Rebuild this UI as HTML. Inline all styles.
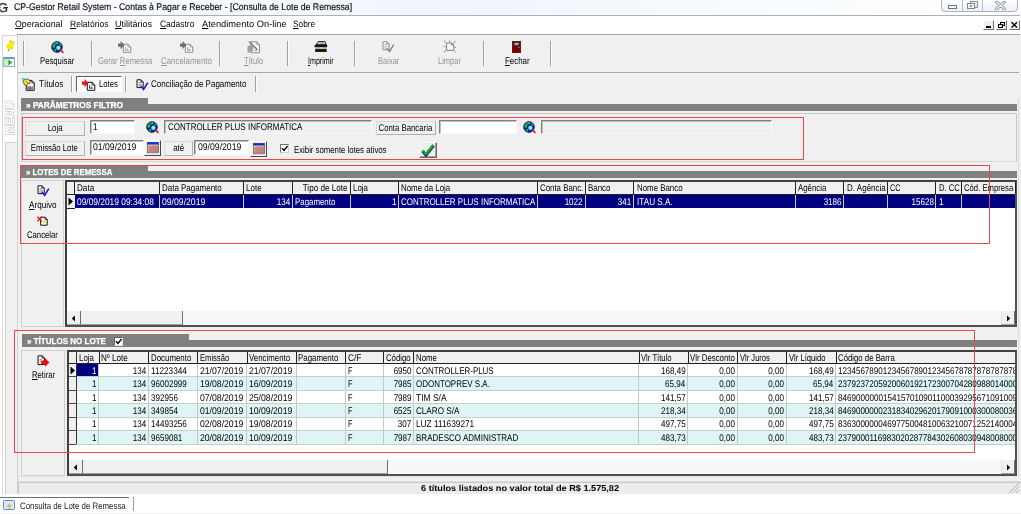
<!DOCTYPE html>
<html><head><meta charset="utf-8"><title>Consulta de Lote de Remessa</title>
<style>
html,body{margin:0;padding:0;background:#fff;}
body{width:1021px;height:514px;position:relative;overflow:hidden;font-family:"Liberation Sans",sans-serif;}
#r div,#r span,#r svg{position:absolute;}
#r{position:absolute;left:0;top:0;width:1021px;height:514px;overflow:hidden;will-change:transform;}
.t{white-space:nowrap;display:block;line-height:12px;text-rendering:geometricPrecision;}
.t u{text-decoration:underline;text-underline-offset:1px;text-decoration-thickness:0.8px;}
</style></head><body><div id="r">
<div style="left:0px;top:0px;width:1021px;height:514px;background:#fff;"></div>
<div style="left:0px;top:0px;width:1021px;height:15px;background:linear-gradient(90deg,#fff 0,#f6fafd 20%,#eef5fb 45%,#f7fbfe 70%,#fff 100%);"></div>
<div style="left:0px;top:14.6px;width:1020px;height:1.3px;background:#b0b0b0;"></div>
<div style="left:0px;top:1.5px;width:9.7px;height:11px;background:#fdfdfd;"></div>
<span class="t " style="left:-1.60px;transform-origin:0 0;top:2px;font-size:12.8px;color:#2a2a2a;transform:scaleX(1.0044);-webkit-text-stroke:0.25px #2a2a2a;">G</span>
<div style="left:3.6px;top:7px;width:4.6px;height:1.2px;background:#2a2a2a;"></div>
<div style="left:0px;top:6.6px;width:1.2px;height:1.4px;background:#f06020;"></div>
<span class="t " style="left:13.80px;transform-origin:0 0;top:2px;font-size:9.7px;color:#0c0c18;transform:scaleX(0.8995);-webkit-text-stroke:0.15px #0c0c18;">CP-Gestor Retail System - Contas à Pagar e Receber - [Consulta de Lote de Remessa]</span>
<div style="left:941px;top:-1px;width:77px;height:13px;border:1px solid #aab2c0;border-radius:0 0 4px 4px;background:linear-gradient(#fdfeff,#edf2f8);box-sizing:border-box"></div>
<div style="left:962px;top:0px;width:1px;height:11px;background:#b4bcc8;"></div>
<div style="left:982px;top:0px;width:1px;height:11px;background:#b4bcc8;"></div>
<div style="left:948px;top:5px;width:9px;height:4px;border:1px solid #6a7284;box-sizing:border-box;background:#fff"></div>
<div style="left:970px;top:1px;width:7.5px;height:6.5px;border:1px solid #8890a4;box-sizing:border-box;background:#e8ecf2"></div>
<div style="left:967px;top:2.8px;width:7.5px;height:6.7px;border:1px solid #7a8296;box-sizing:border-box;background:#f4f6fa"></div>
<div style="left:969.6px;top:5px;width:2.4px;height:2.4px;border:0.6px solid #8890a4;box-sizing:border-box"></div>
<svg style="left:995px;top:1px" width="11" height="9" viewBox="0 0 11 9"><path d="M1.5 1 L9.5 8 M9.5 1 L1.5 8" stroke="#7c849a" stroke-width="2.8" stroke-linecap="round" fill="none"/><path d="M1.5 1 L9.5 8 M9.5 1 L1.5 8" stroke="#fff" stroke-width="1.1" stroke-linecap="round" fill="none"/></svg>
<span class="t " style="left:14.70px;transform-origin:0 0;top:18px;font-size:9.2px;color:#000;transform:scaleX(0.9575);"><u>O</u>peracional</span>
<span class="t " style="left:69.60px;transform-origin:0 0;top:18px;font-size:9.2px;color:#000;transform:scaleX(0.9295);"><u>R</u>elatórios</span>
<span class="t " style="left:115.00px;transform-origin:0 0;top:18px;font-size:9.2px;color:#000;transform:scaleX(0.9781);"><u>U</u>tilitários</span>
<span class="t " style="left:160.30px;transform-origin:0 0;top:18px;font-size:9.2px;color:#000;transform:scaleX(0.9215);"><u>C</u>adastro</span>
<span class="t " style="left:202.00px;transform-origin:0 0;top:18px;font-size:9.2px;color:#000;transform:scaleX(1.0111);"><u>A</u>tendimento On-line</span>
<span class="t " style="left:292.60px;transform-origin:0 0;top:18px;font-size:9.2px;color:#000;transform:scaleX(0.9042);"><u>S</u>obre</span>
<div style="left:17px;top:34px;width:1003px;height:1px;background:#a6a6a6;"></div>
<div style="left:983px;top:19.5px;width:11px;height:10px;background:#f0f0f0;border-right:1px solid #707070;border-bottom:1px solid #707070;border-top:1px solid #fff;border-left:1px solid #fff;box-sizing:border-box"></div>
<div style="left:996px;top:19.5px;width:11px;height:10px;background:#f0f0f0;border-right:1px solid #707070;border-bottom:1px solid #707070;border-top:1px solid #fff;border-left:1px solid #fff;box-sizing:border-box"></div>
<div style="left:1009px;top:19.5px;width:11px;height:10px;background:#f0f0f0;border-right:1px solid #707070;border-bottom:1px solid #707070;border-top:1px solid #fff;border-left:1px solid #fff;box-sizing:border-box"></div>
<div style="left:986px;top:25.5px;width:5px;height:2px;background:#000;"></div>
<div style="left:1000px;top:21.5px;width:5px;height:4px;border:1px solid #000;border-top-width:1.5px;box-sizing:border-box"></div>
<div style="left:998px;top:23.5px;width:5px;height:4px;border:1px solid #000;border-top-width:1.5px;box-sizing:border-box;background:#f0f0f0"></div>
<svg style="left:1010px;top:20.5px" width="9" height="8" viewBox="0 0 9 8"><path d="M1.5 1.2 L7 6.5 M7 1.2 L1.5 6.5" stroke="#000" stroke-width="1.3" fill="none"/></svg>
<div style="left:0px;top:35px;width:1021px;height:459px;background:#f0f0f0;"></div>
<div style="left:0px;top:35px;width:18px;height:459px;background:#fff;"></div>
<div style="left:2px;top:36px;width:1px;height:458px;background:#d4d4d4;"></div>
<div style="left:17px;top:36px;width:1px;height:458px;background:#d0d0d0;"></div>
<div style="left:2px;top:35px;width:16px;height:1px;background:#d4d4d4;"></div>
<div style="left:6px;top:142px;width:11px;height:352px;background:#f0f0f0;"></div>
<div style="left:5px;top:142px;width:1px;height:352px;background:#d0d0d0;"></div>
<div style="left:5px;top:142px;width:13px;height:1px;background:#d0d0d0;"></div>
<div style="left:7px;top:143px;width:10px;height:351px;background:#f0f0f0;"></div>
<span class="t" style="left:3.5px;top:134.8px;font-size:12.6px;line-height:13px;font-weight:bold;color:#fff;-webkit-text-stroke:0.9px #b4b4b4;paint-order:stroke fill;transform:rotate(-90deg) scaleX(0.93);transform-origin:0 0;">MENU</span>
<svg style="left:5px;top:39px" width="11" height="14" viewBox="0 0 11 14"><path d="M4.6 1.3 L9.6 3.2 L8.6 4.6 L7.9 6.5 L8.3 9 Q6.5 11 3.6 10 Q1.2 8.8 1.4 6.6 L3.6 5.4 L4.6 3.6 Z" fill="#f4ec10" stroke="#d8cc20" stroke-width="0.5"/><path d="M4.6 1.3 L9.6 3.2 L9.2 4 L4.4 2.2 Z" fill="#e0d400"/><path d="M4 10.2 L3 12.6" stroke="#808080" stroke-width="0.9"/></svg>
<div style="left:3px;top:56.5px;width:12px;height:10px;border:1px solid #8ab0e4;border-top:2px solid #6a98dc;border-radius:1px;box-sizing:border-box;background:#fff"></div>
<div style="left:4px;top:58.5px;width:4.5px;height:7px;background:#c8f0c0;"></div>
<svg style="left:7.5px;top:58.5px" width="5" height="7" viewBox="0 0 5 7"><path d="M0.3 0.5 L4.6 3.5 L0.3 6.5 Z" fill="#38a838"/></svg>
<div style="left:18px;top:72px;width:1001px;height:1px;background:#a8a8a8;"></div>
<div style="left:23px;top:41px;width:1px;height:25px;background:#a0a0a0;"></div>
<div style="left:24px;top:41px;width:1px;height:25px;background:#fdfdfd;"></div>
<div style="left:91px;top:41px;width:1px;height:25px;background:#a0a0a0;"></div>
<div style="left:92px;top:41px;width:1px;height:25px;background:#fdfdfd;"></div>
<div style="left:219px;top:41px;width:1px;height:25px;background:#a0a0a0;"></div>
<div style="left:220px;top:41px;width:1px;height:25px;background:#fdfdfd;"></div>
<div style="left:287px;top:41px;width:1px;height:25px;background:#a0a0a0;"></div>
<div style="left:288px;top:41px;width:1px;height:25px;background:#fdfdfd;"></div>
<div style="left:354px;top:41px;width:1px;height:25px;background:#a0a0a0;"></div>
<div style="left:355px;top:41px;width:1px;height:25px;background:#fdfdfd;"></div>
<div style="left:483px;top:41px;width:1px;height:25px;background:#a0a0a0;"></div>
<div style="left:484px;top:41px;width:1px;height:25px;background:#fdfdfd;"></div>
<div style="left:550px;top:41px;width:1px;height:25px;background:#a0a0a0;"></div>
<div style="left:551px;top:41px;width:1px;height:25px;background:#fdfdfd;"></div>
<svg style="left:50.5px;top:40.5px" width="14" height="13" viewBox="0 0 14 13"><circle cx="6" cy="6" r="5.4" fill="#0a18b8" stroke="#101830" stroke-width="0.7"/><path d="M2 3.2 Q3.8 0.9 6.6 1 L7.4 2.2 L5.8 3.4 L4.6 3.2 L3.8 4.8 L4.4 6 L3 6.8 L1.2 6.2 Z" fill="#18b030"/><path d="M2.6 8.2 L4.8 7.6 L5.6 9.6 L4.4 11 Z" fill="#18b030"/><path d="M8.2 1.6 L10.4 3.2 L10.8 5 L9.4 4.6 L8.4 3.4Z" fill="#18b030"/><path d="M2.4 5.4 L3.4 5.2 M6.2 2 L7 2.2" stroke="#e8ffe8" stroke-width="0.8"/><circle cx="7.4" cy="6.8" r="2.5" fill="#78f4fc" stroke="#082060" stroke-width="0.7"/><path d="M9.4 8.8 L12.4 11.8" stroke="#e8104a" stroke-width="1.7"/></svg>
<span class="t " style="left:40.00px;transform-origin:0 0;top:56px;font-size:9.7px;color:#000;transform:scaleX(0.7970);">Pesquisar</span>
<svg style="left:118px;top:40.8px" width="14" height="12" viewBox="0 0 14 12"><path d="M5.3 3.3 H10 L12.8 6 V11.3 H5.3 Z" fill="#fafafa" stroke="#8a8a8a" stroke-width="1"/><path d="M10 3.3 V6 H12.8" fill="none" stroke="#8a8a8a" stroke-width="0.8"/><path d="M7.5 6 V9.2 M7.2 9.2 H11 M9.3 7.5 V9.2" stroke="#9a9a9a" stroke-width="0.9" fill="none"/><path d="M0 2.4 H2.6 V0 L6.6 4.1 L2.6 8.2 V5.8 H0 Z" fill="#707070"/></svg>
<svg style="left:179.5px;top:40.8px" width="14" height="12" viewBox="0 0 14 12"><path d="M5.3 3.3 H10 L12.8 6 V11.3 H5.3 Z" fill="#fafafa" stroke="#8a8a8a" stroke-width="1"/><path d="M10 3.3 V6 H12.8" fill="none" stroke="#8a8a8a" stroke-width="0.8"/><path d="M7.5 6 V9.2 M7.2 9.2 H11 M9.3 7.5 V9.2" stroke="#9a9a9a" stroke-width="0.9" fill="none"/><path d="M0 2.4 H2.6 V0 L6.6 4.1 L2.6 8.2 V5.8 H0 Z" fill="#707070"/></svg>
<span class="t " style="left:98.00px;transform-origin:0 0;top:56px;font-size:9.7px;color:#949494;transform:scaleX(0.7946);">Gerar <u>R</u>emessa</span>
<span class="t " style="left:160.50px;transform-origin:0 0;top:56px;font-size:9.7px;color:#949494;transform:scaleX(0.8153);"><u>C</u>ancelamento</span>
<svg style="left:246.6px;top:40.6px" width="14" height="13" viewBox="0 0 14 13"><path d="M4 0.8 H9.8 L12.6 3.6 V11.8 H4 Z" fill="#f6f6f6" stroke="#8c8c8c" stroke-width="1"/><path d="M9.8 0.8 V3.6 H12.6" fill="none" stroke="#8c8c8c" stroke-width="0.8"/><path d="M0.5 5.2 L3.6 4 L5.8 5 L6.4 8 L4.6 11.4 H0.5 Z" fill="#a0a0a0"/><path d="M2 0.6 L10.4 8.8" stroke="#787878" stroke-width="1.4"/><path d="M6.6 9.6 H10.6" stroke="#a0a0a0" stroke-width="0.9"/></svg>
<span class="t " style="left:243.50px;transform-origin:0 0;top:56px;font-size:9.7px;color:#949494;transform:scaleX(0.7914);"><u>T</u>ítulo</span>
<svg style="left:314px;top:41px" width="14" height="12" viewBox="0 0 14 12"><path d="M4.2 0.6 H10.8 L12.2 3.8 H2.4 Z" fill="#f0f0f0" stroke="#000" stroke-width="0.9"/><path d="M5.4 1.9 H10 M4.8 2.9 H10.6" stroke="#606060" stroke-width="0.5"/><rect x="0.6" y="3.6" width="12.6" height="3" rx="1.2" fill="#141414"/><rect x="0.9" y="6.2" width="12" height="2" fill="#b4b4b4"/><rect x="6" y="6.4" width="2.8" height="1.4" fill="#f0e000"/><rect x="1" y="7.9" width="11.8" height="3.2" rx="1.2" fill="#1c1c1c"/></svg>
<span class="t " style="left:308.30px;transform-origin:0 0;top:56px;font-size:9.7px;color:#000;transform:scaleX(0.7338);"><u>I</u>mprimir</span>
<svg style="left:382.3px;top:41px" width="13" height="12" viewBox="0 0 13 12"><path d="M1 0.8 H5 L7.2 3 V8.8 H1 Z" fill="#f8f8f8" stroke="#8c8c8c" stroke-width="1"/><path d="M5 0.8 V3 H7.2" fill="none" stroke="#8c8c8c" stroke-width="0.8"/><path d="M2.4 3.6 H5.6 M2.4 5.4 H5.6 M2.4 7 H4.4" stroke="#a8a8a8" stroke-width="0.8"/><path d="M4.8 6.8 L7.6 10.6 L11.8 3.4" fill="none" stroke="#808080" stroke-width="1.3"/></svg>
<span class="t " style="left:377.80px;transform-origin:0 0;top:56px;font-size:9.7px;color:#949494;transform:scaleX(0.7783);">Baixar</span>
<svg style="left:442.6px;top:40.4px" width="14" height="13" viewBox="0 0 14 13"><path d="M3.6 3 H8.4 L10.8 5.2 V10.4 H3.6 Z" fill="#f8f8f8" stroke="#808080" stroke-width="1"/><path d="M8.4 3 V5.2 H10.8" fill="none" stroke="#808080" stroke-width="0.8"/><path d="M0.8 0.6 L3.2 2.8 M12.8 0.8 L9.6 4 M0.6 6.6 H2.6 M0.8 12 L3.2 10.4 M12.8 12.2 L11.2 10.8 M6.8 0.4 V2.4 M11.4 7.4 H13" stroke="#808080" stroke-width="0.9"/></svg>
<span class="t " style="left:438.40px;transform-origin:0 0;top:56px;font-size:9.7px;color:#949494;transform:scaleX(0.7757);">Limpar</span>
<svg style="left:512px;top:41px" width="9" height="12" viewBox="0 0 9 12"><rect x="0.3" y="0.3" width="8.4" height="11.4" fill="#800000" stroke="#400000" stroke-width="0.6"/><rect x="2.3" y="1.8" width="4.4" height="2.4" fill="#30d8f0"/><rect x="6.4" y="6" width="1" height="1" fill="#f0c020"/></svg>
<span class="t " style="left:505.00px;transform-origin:0 0;top:56px;font-size:9.7px;color:#000;transform:scaleX(0.8148);"><u>F</u>echar</span>
<svg style="left:21.6px;top:77.6px" width="13" height="13" viewBox="0 0 13 13"><path d="M4.2 2.4 H9.8 L12.2 4.8 V12.3 H4.2 Z" fill="#fff" stroke="#101010" stroke-width="1"/><path d="M9.8 2.4 V4.8 H12.2" fill="none" stroke="#101010" stroke-width="0.8"/><path d="M5.8 11 V8.2 M7.2 11 V8.2 M8.6 11 V8.2 M10.2 11 V8.2" stroke="#202020" stroke-width="0.8"/><path d="M5.6 11.2 H10.6" stroke="#202020" stroke-width="0.6"/><path d="M0 0 H3 L0 3 Z" fill="#20d8f0"/><path d="M1 3.6 Q1.4 1.2 4.4 0.9 Q7.4 1.1 8.2 3.2 L7.6 6 L5.8 5 L4.8 7.6 L2.6 7 Z" fill="#f0e050" stroke="#403800" stroke-width="0.7"/><path d="M3 3 L5.4 4.6" stroke="#807000" stroke-width="0.6"/></svg>
<span class="t " style="left:39.20px;transform-origin:0 0;top:79px;font-size:9.7px;color:#000;transform:scaleX(0.8313);">Títulos</span>
<div style="left:71px;top:76px;width:1px;height:16px;background:#a0a0a0;"></div>
<div style="left:72px;top:76px;width:1px;height:16px;background:#fdfdfd;"></div>
<div style="left:76px;top:76px;width:46px;height:16px;background:#fafafa;border-top:1px solid #606060;border-left:1px solid #606060;border-right:1px solid #fff;border-bottom:1px solid #fff;box-sizing:border-box"></div>
<svg style="left:82px;top:78.7px" width="14" height="12" viewBox="0 0 14 12"><path d="M5.3 3.3 H10 L12.8 6 V11.3 H5.3 Z" fill="#fff" stroke="#101010" stroke-width="1"/><path d="M10 3.3 V6 H12.8" fill="none" stroke="#101010" stroke-width="0.8"/><path d="M7.5 6 V9.2 M7.2 9.2 H11 M9.3 7.5 V9.2" stroke="#404040" stroke-width="0.9" fill="none"/><path d="M0 2.4 H2.6 V0 L6.6 4.1 L2.6 8.2 V5.8 H0 Z" fill="#f01010"/></svg>
<span class="t " style="left:99.00px;transform-origin:0 0;top:79px;font-size:9.7px;color:#000;transform:scaleX(0.7923);">Lotes</span>
<div style="left:125px;top:76px;width:1px;height:16px;background:#a0a0a0;"></div>
<div style="left:126px;top:76px;width:1px;height:16px;background:#fdfdfd;"></div>
<svg style="left:135.7px;top:78.8px" width="13" height="12" viewBox="0 0 13 12"><path d="M1 0.8 H5 L7.2 3 V8.6 H1 Z" fill="#fff" stroke="#101010" stroke-width="1"/><path d="M5 0.8 V3 H7.2" fill="none" stroke="#101010" stroke-width="0.8"/><path d="M2.4 3.6 H5.6 M2.4 5.4 H5.6 M2.4 7 H4.4" stroke="#707070" stroke-width="0.8"/><path d="M4.8 6.6 L7.6 10.4 L11.8 3.6" fill="none" stroke="#1018e0" stroke-width="1.6"/></svg>
<span class="t " style="left:151.40px;transform-origin:0 0;top:79px;font-size:9.7px;color:#000;transform:scaleX(0.8246);">Conciliação de Pagamento</span>
<div style="left:255px;top:76px;width:1px;height:16px;background:#a0a0a0;"></div>
<div style="left:256px;top:76px;width:1px;height:16px;background:#fdfdfd;"></div>
<div style="left:21px;top:98px;width:127px;height:12.7px;background:#808080;"></div>
<div style="left:21px;top:103.9px;width:996px;height:6.8px;background:#808080;"></div>
<span class="t " style="left:26.20px;transform-origin:0 0;top:99px;font-size:8.6px;color:#fff;font-weight:bold;transform:scaleX(0.9652);-webkit-text-stroke:0.25px #fff;">» PARÂMETROS FILTRO</span>
<div style="left:21px;top:113px;width:996px;height:49px;border:1px solid #c8c8c8;border-bottom-color:#d8d8d8;box-sizing:border-box;background:#f0f0f0"></div>
<div style="left:25px;top:121px;width:59.5px;height:14.5px;background:#f0f0f0;border:1px solid #b0b0b0;border-top-color:#d8d8d8;border-left-color:#d8d8d8;box-sizing:border-box"></div>
<span class="t " style="left:45.58px;transform-origin:50% 0;top:123px;font-size:9.7px;color:#000;transform:scaleX(0.8151);">Loja</span>
<div style="left:90px;top:120px;width:45px;height:14px;background:#fff;border-top:1px solid #808080;border-left:1px solid #808080;border-right:1px solid #f8f8f8;border-bottom:1px solid #f8f8f8;box-sizing:border-box;box-shadow:inset 1px 1px 0 #c0c0c0"></div>
<span class="t " style="left:93.00px;transform-origin:0 0;top:122px;font-size:9.7px;color:#000;transform:scaleX(0.8312);">1</span>
<svg style="left:145.5px;top:120.5px" width="14" height="13" viewBox="0 0 14 13"><circle cx="6" cy="6" r="5.4" fill="#0a18b8" stroke="#101830" stroke-width="0.7"/><path d="M2 3.2 Q3.8 0.9 6.6 1 L7.4 2.2 L5.8 3.4 L4.6 3.2 L3.8 4.8 L4.4 6 L3 6.8 L1.2 6.2 Z" fill="#18b030"/><path d="M2.6 8.2 L4.8 7.6 L5.6 9.6 L4.4 11 Z" fill="#18b030"/><path d="M8.2 1.6 L10.4 3.2 L10.8 5 L9.4 4.6 L8.4 3.4Z" fill="#18b030"/><path d="M2.4 5.4 L3.4 5.2 M6.2 2 L7 2.2" stroke="#e8ffe8" stroke-width="0.8"/><circle cx="7.4" cy="6.8" r="2.5" fill="#78f4fc" stroke="#082060" stroke-width="0.7"/><path d="M9.4 8.8 L12.4 11.8" stroke="#e8104a" stroke-width="1.7"/></svg>
<div style="left:164px;top:120px;width:208px;height:14px;background:#f0f0f0;border-top:1px solid #808080;border-left:1px solid #808080;border-right:1px solid #f8f8f8;border-bottom:1px solid #f8f8f8;box-sizing:border-box;box-shadow:inset 1px 1px 0 #c0c0c0"></div>
<span class="t " style="left:167.50px;transform-origin:0 0;top:122px;font-size:9.7px;color:#000;transform:scaleX(0.8247);">CONTROLLER PLUS INFORMATICA</span>
<div style="left:376px;top:121px;width:59.6px;height:14px;background:#f0f0f0;border:1px solid #b0b0b0;border-top-color:#d8d8d8;border-left-color:#d8d8d8;box-sizing:border-box"></div>
<span class="t " style="left:372.37px;transform-origin:50% 0;top:123px;font-size:9.7px;color:#000;transform:scaleX(0.8048);">Conta Bancaria</span>
<div style="left:439px;top:120px;width:78px;height:14px;background:#fff;border-top:1px solid #808080;border-left:1px solid #808080;border-right:1px solid #f8f8f8;border-bottom:1px solid #f8f8f8;box-sizing:border-box;box-shadow:inset 1px 1px 0 #c0c0c0"></div>
<svg style="left:523px;top:121px" width="14" height="13" viewBox="0 0 14 13"><circle cx="6" cy="6" r="5.4" fill="#0a18b8" stroke="#101830" stroke-width="0.7"/><path d="M2 3.2 Q3.8 0.9 6.6 1 L7.4 2.2 L5.8 3.4 L4.6 3.2 L3.8 4.8 L4.4 6 L3 6.8 L1.2 6.2 Z" fill="#18b030"/><path d="M2.6 8.2 L4.8 7.6 L5.6 9.6 L4.4 11 Z" fill="#18b030"/><path d="M8.2 1.6 L10.4 3.2 L10.8 5 L9.4 4.6 L8.4 3.4Z" fill="#18b030"/><path d="M2.4 5.4 L3.4 5.2 M6.2 2 L7 2.2" stroke="#e8ffe8" stroke-width="0.8"/><circle cx="7.4" cy="6.8" r="2.5" fill="#78f4fc" stroke="#082060" stroke-width="0.7"/><path d="M9.4 8.8 L12.4 11.8" stroke="#e8104a" stroke-width="1.7"/></svg>
<div style="left:541px;top:120px;width:231px;height:14px;background:#f0f0f0;border-top:1px solid #808080;border-left:1px solid #808080;border-right:1px solid #f8f8f8;border-bottom:1px solid #f8f8f8;box-sizing:border-box;box-shadow:inset 1px 1px 0 #c0c0c0"></div>
<div style="left:25px;top:141px;width:59.5px;height:14.7px;background:#f0f0f0;border:1px solid #b0b0b0;border-top-color:#d8d8d8;border-left-color:#d8d8d8;box-sizing:border-box"></div>
<span class="t " style="left:25.37px;transform-origin:50% 0;top:143px;font-size:9.7px;color:#000;transform:scaleX(0.8012);">Emissão Lote</span>
<div style="left:90px;top:140px;width:54px;height:15px;background:#fff;border-top:1px solid #808080;border-left:1px solid #808080;border-right:1px solid #f8f8f8;border-bottom:1px solid #f8f8f8;box-sizing:border-box;box-shadow:inset 1px 1px 0 #c0c0c0"></div>
<span class="t " style="left:93.00px;transform-origin:0 0;top:142px;font-size:9.7px;color:#000;transform:scaleX(0.8929);">01/09/2019</span>
<div style="left:144px;top:140px;width:17px;height:16px;background:#f0f0f0;border-top:1px solid #fff;border-left:1px solid #fff;border-right:1.5px solid #484848;border-bottom:1.5px solid #484848;box-sizing:border-box"></div>
<svg style="left:147px;top:142px" width="13" height="12" viewBox="0 0 13 12"><rect x="0.4" y="0.4" width="11.2" height="10.4" fill="#fff" stroke="#505050" stroke-width="0.7"/><rect x="0.4" y="0.2" width="11.2" height="2" fill="#1030e0"/><path d="M0.4 2.4 H11.6" stroke="#202020" stroke-width="0.5"/><path d="M3.15 2.6 V10.6 M5.25 2.6 V10.6 M7.35 2.6 V10.6 M9.45 2.6 V10.6 M0.6 5.1 H11.4 M0.6 6.95 H11.4 M0.6 8.8 H11.4" stroke="#585858" stroke-width="0.5"/><rect x="1.50" y="3.60" width="1.2" height="1.1" fill="#e83030"/><rect x="3.60" y="3.60" width="1.2" height="1.1" fill="#e83030"/><rect x="5.70" y="3.60" width="1.2" height="1.1" fill="#e83030"/><rect x="7.80" y="3.60" width="1.2" height="1.1" fill="#e83030"/><rect x="9.90" y="3.60" width="1.2" height="1.1" fill="#e83030"/><rect x="1.50" y="5.45" width="1.2" height="1.1" fill="#e83030"/><rect x="3.60" y="5.45" width="1.2" height="1.1" fill="#e83030"/><rect x="5.70" y="5.45" width="1.2" height="1.1" fill="#e83030"/><rect x="7.80" y="5.45" width="1.2" height="1.1" fill="#e83030"/><rect x="9.90" y="5.45" width="1.2" height="1.1" fill="#e83030"/><rect x="1.50" y="7.30" width="1.2" height="1.1" fill="#e83030"/><rect x="3.60" y="7.30" width="1.2" height="1.1" fill="#e83030"/><rect x="5.70" y="7.30" width="1.2" height="1.1" fill="#e83030"/><rect x="7.80" y="7.30" width="1.2" height="1.1" fill="#e83030"/><rect x="9.90" y="7.30" width="1.2" height="1.1" fill="#e83030"/><rect x="1.50" y="9.15" width="1.2" height="1.1" fill="#e83030"/><rect x="3.60" y="9.15" width="1.2" height="1.1" fill="#e83030"/><rect x="5.70" y="9.15" width="1.2" height="1.1" fill="#e83030"/><rect x="7.80" y="9.15" width="1.2" height="1.1" fill="#e83030"/><rect x="9.90" y="9.15" width="1.2" height="1.1" fill="#e83030"/></svg>
<div style="left:164.4px;top:141.3px;width:28.3px;height:14.3px;background:#f0f0f0;border:1px solid #b0b0b0;border-top-color:#d8d8d8;border-left-color:#d8d8d8;box-sizing:border-box"></div>
<span class="t " style="left:171.81px;transform-origin:50% 0;top:143px;font-size:9.7px;color:#000;transform:scaleX(0.8314);">até</span>
<div style="left:194px;top:140px;width:55px;height:15px;background:#fff;border-top:1px solid #808080;border-left:1px solid #808080;border-right:1px solid #f8f8f8;border-bottom:1px solid #f8f8f8;box-sizing:border-box;box-shadow:inset 1px 1px 0 #c0c0c0"></div>
<span class="t " style="left:198.00px;transform-origin:0 0;top:142px;font-size:9.7px;color:#000;transform:scaleX(0.8929);">09/09/2019</span>
<div style="left:249.5px;top:140.5px;width:17px;height:16px;background:#f0f0f0;border-top:1px solid #fff;border-left:1px solid #fff;border-right:1.5px solid #484848;border-bottom:1.5px solid #484848;box-sizing:border-box"></div>
<svg style="left:252.5px;top:142.5px" width="13" height="12" viewBox="0 0 13 12"><rect x="0.4" y="0.4" width="11.2" height="10.4" fill="#fff" stroke="#505050" stroke-width="0.7"/><rect x="0.4" y="0.2" width="11.2" height="2" fill="#1030e0"/><path d="M0.4 2.4 H11.6" stroke="#202020" stroke-width="0.5"/><path d="M3.15 2.6 V10.6 M5.25 2.6 V10.6 M7.35 2.6 V10.6 M9.45 2.6 V10.6 M0.6 5.1 H11.4 M0.6 6.95 H11.4 M0.6 8.8 H11.4" stroke="#585858" stroke-width="0.5"/><rect x="1.50" y="3.60" width="1.2" height="1.1" fill="#e83030"/><rect x="3.60" y="3.60" width="1.2" height="1.1" fill="#e83030"/><rect x="5.70" y="3.60" width="1.2" height="1.1" fill="#e83030"/><rect x="7.80" y="3.60" width="1.2" height="1.1" fill="#e83030"/><rect x="9.90" y="3.60" width="1.2" height="1.1" fill="#e83030"/><rect x="1.50" y="5.45" width="1.2" height="1.1" fill="#e83030"/><rect x="3.60" y="5.45" width="1.2" height="1.1" fill="#e83030"/><rect x="5.70" y="5.45" width="1.2" height="1.1" fill="#e83030"/><rect x="7.80" y="5.45" width="1.2" height="1.1" fill="#e83030"/><rect x="9.90" y="5.45" width="1.2" height="1.1" fill="#e83030"/><rect x="1.50" y="7.30" width="1.2" height="1.1" fill="#e83030"/><rect x="3.60" y="7.30" width="1.2" height="1.1" fill="#e83030"/><rect x="5.70" y="7.30" width="1.2" height="1.1" fill="#e83030"/><rect x="7.80" y="7.30" width="1.2" height="1.1" fill="#e83030"/><rect x="9.90" y="7.30" width="1.2" height="1.1" fill="#e83030"/><rect x="1.50" y="9.15" width="1.2" height="1.1" fill="#e83030"/><rect x="3.60" y="9.15" width="1.2" height="1.1" fill="#e83030"/><rect x="5.70" y="9.15" width="1.2" height="1.1" fill="#e83030"/><rect x="7.80" y="9.15" width="1.2" height="1.1" fill="#e83030"/><rect x="9.90" y="9.15" width="1.2" height="1.1" fill="#e83030"/></svg>
<div style="left:280px;top:144px;width:9px;height:9px;background:#fff;border:1px solid #707070;border-right-color:#d0d0d0;border-bottom-color:#d0d0d0;box-sizing:border-box"></div>
<svg style="left:281px;top:145px" width="8" height="8" viewBox="0 0 8 8"><path d="M1 3.2 L3 5.5 L6.5 1" fill="none" stroke="#000" stroke-width="1.4"/></svg>
<span class="t " style="left:293.80px;transform-origin:0 0;top:145px;font-size:9.7px;color:#000;transform:scaleX(0.8026);">Exibir somente lotes ativos</span>
<div style="left:419px;top:142px;width:18px;height:16px;background:#f0f0f0;border-top:1px solid #fff;border-left:1px solid #fff;border-right:1px solid #696969;border-bottom:1px solid #696969;box-sizing:border-box;box-shadow:inset -1px -1px 0 #a0a0a0, inset 1px 1px 0 #e8e8e8"></div>
<svg style="left:421px;top:143.5px" width="14" height="13" viewBox="0 0 14 13"><path d="M1.5 7 L5 11 L12.5 1.5" fill="none" stroke="#101080" stroke-width="3.2"/><path d="M1.5 6.5 L5 10.3 L12.5 1" fill="none" stroke="#18b018" stroke-width="2.2"/></svg>
<div style="left:22px;top:117px;width:782px;height:43px;border:1px solid #e8474f;box-sizing:border-box"></div>
<div style="left:20px;top:165px;width:970px;height:79px;border:1px solid #e8474f;box-sizing:border-box"></div>
<div style="left:21px;top:165px;width:127px;height:12.7px;background:#808080;"></div>
<div style="left:21px;top:170.7px;width:996px;height:7px;background:#808080;"></div>
<span class="t " style="left:26.20px;transform-origin:0 0;top:166px;font-size:8.6px;color:#fff;font-weight:bold;transform:scaleX(0.9096);-webkit-text-stroke:0.25px #fff;">» LOTES DE REMESSA</span>
<div style="left:21px;top:180px;width:43px;height:147px;border:1px solid #d0d0d0;box-sizing:border-box;background:#f0f0f0"></div>
<svg style="left:36.6px;top:185.2px" width="13" height="12" viewBox="0 0 13 12"><path d="M1 0.8 H5 L7.2 3 V8.6 H1 Z" fill="#fff" stroke="#101010" stroke-width="1"/><path d="M5 0.8 V3 H7.2" fill="none" stroke="#101010" stroke-width="0.8"/><path d="M2.4 3.6 H5.6 M2.4 5.4 H5.6 M2.4 7 H4.4" stroke="#707070" stroke-width="0.8"/><path d="M4.8 6.6 L7.6 10.4 L11.8 3.6" fill="none" stroke="#1018e0" stroke-width="1.6"/></svg>
<span class="t " style="left:28.50px;transform-origin:0 0;top:200px;font-size:9.7px;color:#000;transform:scaleX(0.8391);"><u>A</u>rquivo</span>
<svg style="left:36.5px;top:215.8px" width="12" height="10" viewBox="0 0 12 10"><path d="M3.6 1.2 H8 L10.2 3.4 V9.2 H3.6 Z" fill="#fff" stroke="#101010" stroke-width="1"/><path d="M8 1.2 V3.4 H10.2" fill="none" stroke="#101010" stroke-width="0.8"/><rect x="5.8" y="4.8" width="3" height="2.4" fill="#f4e040"/><path d="M0.4 0.6 L4.8 5.4 M4.8 0.6 L0.4 5.4" stroke="#e81010" stroke-width="1.4"/></svg>
<span class="t " style="left:26.80px;transform-origin:0 0;top:230px;font-size:9.7px;color:#000;transform:scaleX(0.7960);">Cancelar</span>
<div style="left:65px;top:180px;width:952px;height:146.7px;background:#fff;border:2px solid #404040;border-right-color:#505050;border-bottom-color:#505050;box-sizing:border-box"></div>
<div style="left:67px;top:182px;width:948px;height:12px;background:#f0f0f0;"></div>
<div style="left:67px;top:194px;width:948px;height:1px;background:#202020;"></div>
<div style="left:74px;top:182px;width:1px;height:26px;background:#202020;"></div>
<div style="left:159px;top:182px;width:1px;height:12px;background:#202020;"></div>
<span class="t " style="left:77.20px;transform-origin:0 0;top:183px;font-size:9.7px;color:#000;transform:scaleX(0.8390);">Data</span>
<div style="left:243px;top:182px;width:1px;height:12px;background:#202020;"></div>
<span class="t " style="left:162.20px;transform-origin:0 0;top:183px;font-size:9.7px;color:#000;transform:scaleX(0.8213);">Data Pagamento</span>
<div style="left:292px;top:182px;width:1px;height:12px;background:#202020;"></div>
<span class="t " style="left:246.20px;transform-origin:0 0;top:183px;font-size:9.7px;color:#000;transform:scaleX(0.8314);">Lote</span>
<div style="left:350px;top:182px;width:1px;height:12px;background:#202020;"></div>
<span class="t " style="left:293.93px;transform-origin:100% 0;top:183px;font-size:9.7px;color:#000;transform:scaleX(0.8371);">Tipo de Lote</span>
<div style="left:398px;top:182px;width:1px;height:12px;background:#202020;"></div>
<span class="t " style="left:353.20px;transform-origin:0 0;top:183px;font-size:9.7px;color:#000;transform:scaleX(0.8151);">Loja</span>
<div style="left:537px;top:182px;width:1px;height:12px;background:#202020;"></div>
<span class="t " style="left:401.20px;transform-origin:0 0;top:183px;font-size:9.7px;color:#000;transform:scaleX(0.8168);">Nome da Loja</span>
<div style="left:585px;top:182px;width:1px;height:12px;background:#202020;"></div>
<span class="t " style="left:539.70px;transform-origin:0 0;top:183px;font-size:9.7px;color:#000;transform:scaleX(0.8120);">Conta Banc.</span>
<div style="left:633px;top:182px;width:1px;height:12px;background:#202020;"></div>
<span class="t " style="left:588.20px;transform-origin:0 0;top:183px;font-size:9.7px;color:#000;transform:scaleX(0.8152);">Banco</span>
<div style="left:795px;top:182px;width:1px;height:12px;background:#202020;"></div>
<span class="t " style="left:636.70px;transform-origin:0 0;top:183px;font-size:9.7px;color:#000;transform:scaleX(0.8130);">Nome Banco</span>
<div style="left:843px;top:182px;width:1px;height:12px;background:#202020;"></div>
<span class="t " style="left:797.70px;transform-origin:0 0;top:183px;font-size:9.7px;color:#000;transform:scaleX(0.8102);">Agência</span>
<div style="left:887px;top:182px;width:1px;height:12px;background:#202020;"></div>
<span class="t " style="left:846.70px;transform-origin:0 0;top:183px;font-size:9.7px;color:#000;transform:scaleX(0.8284);">D. Agência</span>
<div style="left:935px;top:182px;width:1px;height:12px;background:#202020;"></div>
<span class="t " style="left:889.70px;transform-origin:0 0;top:183px;font-size:9.7px;color:#000;transform:scaleX(0.7468);">CC</span>
<div style="left:961px;top:182px;width:1px;height:12px;background:#202020;"></div>
<span class="t " style="left:938.70px;transform-origin:0 0;top:183px;font-size:9.7px;color:#000;transform:scaleX(0.7925);">D. CC</span>
<div style="left:1014.5px;top:182px;width:1px;height:12px;background:#202020;"></div>
<span class="t " style="left:963.70px;transform-origin:0 0;top:183px;font-size:9.7px;color:#000;transform:scaleX(0.7956);">Cód. Empresa</span>
<div style="left:75px;top:195px;width:940px;height:13px;background:#000080;"></div>
<div style="left:67px;top:195px;width:7.5px;height:13px;background:#f0f0f0;"></div>
<div style="left:67px;top:208px;width:8px;height:1px;background:#202020;"></div>
<svg style="left:68px;top:197px" width="6" height="9" viewBox="0 0 6 9"><path d="M0.5 0.5 L5 4.5 L0.5 8.5 Z" fill="#000"/></svg>
<div style="left:159px;top:195px;width:1px;height:13px;background:#c8c8d8;"></div>
<span class="t " style="left:77.20px;transform-origin:0 0;top:197px;font-size:9.7px;color:#fff;transform:scaleX(0.8649);">09/09/2019 09:34:08</span>
<div style="left:243px;top:195px;width:1px;height:13px;background:#c8c8d8;"></div>
<span class="t " style="left:162.20px;transform-origin:0 0;top:197px;font-size:9.7px;color:#fff;transform:scaleX(0.8929);">09/09/2019</span>
<div style="left:292px;top:195px;width:1px;height:13px;background:#c8c8d8;"></div>
<span class="t " style="left:273.82px;transform-origin:100% 0;top:197px;font-size:9.7px;color:#fff;transform:scaleX(0.8312);">134</span>
<div style="left:350px;top:195px;width:1px;height:13px;background:#c8c8d8;"></div>
<span class="t " style="left:295.20px;transform-origin:0 0;top:197px;font-size:9.7px;color:#fff;transform:scaleX(0.8135);">Pagamento</span>
<div style="left:398px;top:195px;width:1px;height:13px;background:#c8c8d8;"></div>
<span class="t " style="left:390.61px;transform-origin:100% 0;top:197px;font-size:9.7px;color:#fff;transform:scaleX(0.8312);">1</span>
<div style="left:537px;top:195px;width:1px;height:13px;background:#c8c8d8;"></div>
<span class="t " style="left:401.20px;transform-origin:0 0;top:197px;font-size:9.7px;color:#fff;transform:scaleX(0.8247);">CONTROLLER PLUS INFORMATICA</span>
<div style="left:585px;top:195px;width:1px;height:13px;background:#c8c8d8;"></div>
<span class="t " style="left:561.42px;transform-origin:100% 0;top:197px;font-size:9.7px;color:#fff;transform:scaleX(0.8312);">1022</span>
<div style="left:633px;top:195px;width:1px;height:13px;background:#c8c8d8;"></div>
<span class="t " style="left:615.32px;transform-origin:100% 0;top:197px;font-size:9.7px;color:#fff;transform:scaleX(0.8312);">341</span>
<div style="left:795px;top:195px;width:1px;height:13px;background:#c8c8d8;"></div>
<span class="t " style="left:636.70px;transform-origin:0 0;top:197px;font-size:9.7px;color:#fff;transform:scaleX(0.8461);">ITAU S.A.</span>
<div style="left:843px;top:195px;width:1px;height:13px;background:#c8c8d8;"></div>
<span class="t " style="left:819.92px;transform-origin:100% 0;top:197px;font-size:9.7px;color:#fff;transform:scaleX(0.8312);">3186</span>
<div style="left:887px;top:195px;width:1px;height:13px;background:#c8c8d8;"></div>
<div style="left:935px;top:195px;width:1px;height:13px;background:#c8c8d8;"></div>
<span class="t " style="left:906.53px;transform-origin:100% 0;top:197px;font-size:9.7px;color:#fff;transform:scaleX(0.8312);">15628</span>
<div style="left:961px;top:195px;width:1px;height:13px;background:#c8c8d8;"></div>
<span class="t " style="left:938.70px;transform-origin:0 0;top:197px;font-size:9.7px;color:#fff;transform:scaleX(0.8312);">1</span>
<div style="left:67px;top:311px;width:948px;height:14px;background:#f8f8f8;"></div>
<div style="left:67px;top:311px;width:14px;height:14px;background:#f0f0f0;border-right:1px solid #707070;border-bottom:1px solid #a0a0a0;box-sizing:border-box"></div>
<svg style="left:71px;top:314.5px" width="5" height="7" viewBox="0 0 5 7"><path d="M4 0.5 L0.8 3.5 L4 6.5 Z" fill="#000"/></svg>
<div style="left:81px;top:311px;width:102px;height:14px;background:#f0f0f0;border-right:1px solid #707070;border-bottom:1px solid #a0a0a0;box-sizing:border-box"></div>
<div style="left:1001px;top:311px;width:14px;height:14px;background:#f0f0f0;border-left:1px solid #e0e0e0;border-right:1px solid #707070;border-bottom:1px solid #a0a0a0;box-sizing:border-box"></div>
<svg style="left:1006px;top:314.5px" width="5" height="7" viewBox="0 0 5 7"><path d="M1 0.5 L4.2 3.5 L1 6.5 Z" fill="#000"/></svg>
<div style="left:14px;top:330px;width:961px;height:123px;border:1px solid #e8474f;box-sizing:border-box"></div>
<div style="left:21.5px;top:334.3px;width:167.5px;height:13.2px;background:#808080;"></div>
<div style="left:21.5px;top:340.3px;width:995.5px;height:7.2px;background:#808080;"></div>
<span class="t " style="left:26.70px;transform-origin:0 0;top:335px;font-size:8.6px;color:#fff;font-weight:bold;transform:scaleX(0.9341);-webkit-text-stroke:0.25px #fff;">» TÍTULOS NO LOTE</span>
<div style="left:113.5px;top:336.5px;width:9.5px;height:9.5px;background:#fff;border:1px solid #606060;border-right-color:#e0e0e0;border-bottom-color:#e0e0e0;box-sizing:border-box"></div>
<svg style="left:114.5px;top:337.5px" width="8" height="8" viewBox="0 0 8 8"><path d="M1 3.2 L3 5.5 L6.5 1" fill="none" stroke="#000" stroke-width="1.4"/></svg>
<div style="left:21px;top:350px;width:44px;height:126px;border:1px solid #d0d0d0;box-sizing:border-box;background:#f0f0f0"></div>
<svg style="left:36.5px;top:354.5px" width="13" height="13" viewBox="0 0 13 13"><path d="M1 0.8 H5.2 L7.4 3 V9.6 H1 Z" fill="#fff" stroke="#101010" stroke-width="1"/><path d="M5.2 0.8 V3 H7.4" fill="none" stroke="#101010" stroke-width="0.8"/><path d="M2.4 4.2 H5 M2.4 6.2 H4.4" stroke="#606060" stroke-width="0.8"/><path d="M4.2 5.6 H8 V3 L12.4 7.4 L8 11.8 V9.2 H4.2 Z" fill="#f01010"/></svg>
<span class="t " style="left:28.75px;transform-origin:50% 0;top:370px;font-size:9.7px;color:#000;transform:scaleX(0.7960);"><u>R</u>etirar</span>
<div style="left:67px;top:350px;width:950px;height:126px;background:#fff;border:2px solid #404040;border-right-color:#505050;border-bottom-color:#505050;box-sizing:border-box"></div>
<div style="left:69px;top:352px;width:946px;height:11.5px;background:#f0f0f0;"></div>
<div style="left:69px;top:363px;width:946px;height:1px;background:#202020;"></div>
<div style="left:75.7px;top:352px;width:1px;height:93px;background:#202020;"></div>
<div style="left:98.5px;top:352px;width:1px;height:11.5px;background:#202020;"></div>
<span class="t " style="left:78.70px;transform-origin:0 0;top:353px;font-size:9.7px;color:#000;transform:scaleX(0.8151);">Loja</span>
<div style="left:148.0px;top:352px;width:1px;height:11.5px;background:#202020;"></div>
<span class="t " style="left:101.20px;transform-origin:0 0;top:353px;font-size:9.7px;color:#000;transform:scaleX(0.8376);">Nº Lote</span>
<div style="left:197.0px;top:352px;width:1px;height:11.5px;background:#202020;"></div>
<span class="t " style="left:150.50px;transform-origin:0 0;top:353px;font-size:9.7px;color:#000;transform:scaleX(0.8136);">Documento</span>
<div style="left:246.5px;top:352px;width:1px;height:11.5px;background:#202020;"></div>
<span class="t " style="left:199.80px;transform-origin:0 0;top:353px;font-size:9.7px;color:#000;transform:scaleX(0.7837);">Emissão</span>
<div style="left:295.5px;top:352px;width:1px;height:11.5px;background:#202020;"></div>
<span class="t " style="left:249.10px;transform-origin:0 0;top:353px;font-size:9.7px;color:#000;transform:scaleX(0.8109);">Vencimento</span>
<div style="left:345.0px;top:352px;width:1px;height:11.5px;background:#202020;"></div>
<span class="t " style="left:298.40px;transform-origin:0 0;top:353px;font-size:9.7px;color:#000;transform:scaleX(0.8135);">Pagamento</span>
<div style="left:383.0px;top:352px;width:1px;height:11.5px;background:#202020;"></div>
<span class="t " style="left:347.70px;transform-origin:0 0;top:353px;font-size:9.7px;color:#000;transform:scaleX(0.8610);">C/F</span>
<div style="left:413.0px;top:352px;width:1px;height:11.5px;background:#202020;"></div>
<span class="t " style="left:385.60px;transform-origin:0 0;top:353px;font-size:9.7px;color:#000;transform:scaleX(0.8024);">Código</span>
<div style="left:638.5px;top:352px;width:1px;height:11.5px;background:#202020;"></div>
<span class="t " style="left:415.70px;transform-origin:0 0;top:353px;font-size:9.7px;color:#000;transform:scaleX(0.8088);">Nome</span>
<div style="left:687.5px;top:352px;width:1px;height:11.5px;background:#202020;"></div>
<span class="t " style="left:641.00px;transform-origin:0 0;top:353px;font-size:9.7px;color:#000;transform:scaleX(0.7931);">Vlr Título</span>
<div style="left:737.0px;top:352px;width:1px;height:11.5px;background:#202020;"></div>
<span class="t " style="left:690.30px;transform-origin:0 0;top:353px;font-size:9.7px;color:#000;transform:scaleX(0.8076);">Vlr Desconto</span>
<div style="left:786.0px;top:352px;width:1px;height:11.5px;background:#202020;"></div>
<span class="t " style="left:739.60px;transform-origin:0 0;top:353px;font-size:9.7px;color:#000;transform:scaleX(0.7812);">Vlr Juros</span>
<div style="left:835.5px;top:352px;width:1px;height:11.5px;background:#202020;"></div>
<span class="t " style="left:788.90px;transform-origin:0 0;top:353px;font-size:9.7px;color:#000;transform:scaleX(0.7897);">Vlr Líquido</span>
<span class="t " style="left:838.20px;transform-origin:0 0;top:353px;font-size:9.7px;color:#000;transform:scaleX(0.8041);">Código de Barra</span>
<div style="left:69px;top:352px;width:946px;height:108px;overflow:hidden">
<div style="left:7px;top:11.8px;width:939px;height:13.45px;background:#fff"></div>
<div style="left:0;top:24.4px;width:946px;height:1px;background:#c8cccc"></div>
<div style="left:0;top:11.8px;width:6.7px;height:12.649999999999999px;background:#f0f0f0"></div>
<div style="left:0;top:24.2px;width:7px;height:1px;background:#484848"></div>
<div style="left:7.5px;top:11.8px;width:22.0px;height:12.649999999999999px;background:#000080"></div>
<div style="left:29.3px;top:11.8px;width:1px;height:13.45px;background:#c4c8c8"></div>
<div style="left:78.6px;top:11.8px;width:1px;height:13.45px;background:#c4c8c8"></div>
<div style="left:127.9px;top:11.8px;width:1px;height:13.45px;background:#c4c8c8"></div>
<div style="left:177.2px;top:11.8px;width:1px;height:13.45px;background:#c4c8c8"></div>
<div style="left:226.5px;top:11.8px;width:1px;height:13.45px;background:#c4c8c8"></div>
<div style="left:275.8px;top:11.8px;width:1px;height:13.45px;background:#c4c8c8"></div>
<div style="left:313.7px;top:11.8px;width:1px;height:13.45px;background:#c4c8c8"></div>
<div style="left:343.8px;top:11.8px;width:1px;height:13.45px;background:#c4c8c8"></div>
<div style="left:569.1px;top:11.8px;width:1px;height:13.45px;background:#c4c8c8"></div>
<div style="left:618.4px;top:11.8px;width:1px;height:13.45px;background:#c4c8c8"></div>
<div style="left:667.7px;top:11.8px;width:1px;height:13.45px;background:#c4c8c8"></div>
<div style="left:717.0px;top:11.8px;width:1px;height:13.45px;background:#c4c8c8"></div>
<div style="left:766.3px;top:11.8px;width:1px;height:13.45px;background:#c4c8c8"></div>
<div style="left:7px;top:25.2px;width:939px;height:13.45px;background:#dff5f5"></div>
<div style="left:0;top:37.8px;width:946px;height:1px;background:#c8cccc"></div>
<div style="left:0;top:25.2px;width:6.7px;height:12.649999999999999px;background:#f0f0f0"></div>
<div style="left:0;top:37.6px;width:7px;height:1px;background:#484848"></div>
<div style="left:29.3px;top:25.2px;width:1px;height:13.45px;background:#c4c8c8"></div>
<div style="left:78.6px;top:25.2px;width:1px;height:13.45px;background:#c4c8c8"></div>
<div style="left:127.9px;top:25.2px;width:1px;height:13.45px;background:#c4c8c8"></div>
<div style="left:177.2px;top:25.2px;width:1px;height:13.45px;background:#c4c8c8"></div>
<div style="left:226.5px;top:25.2px;width:1px;height:13.45px;background:#c4c8c8"></div>
<div style="left:275.8px;top:25.2px;width:1px;height:13.45px;background:#c4c8c8"></div>
<div style="left:313.7px;top:25.2px;width:1px;height:13.45px;background:#c4c8c8"></div>
<div style="left:343.8px;top:25.2px;width:1px;height:13.45px;background:#c4c8c8"></div>
<div style="left:569.1px;top:25.2px;width:1px;height:13.45px;background:#c4c8c8"></div>
<div style="left:618.4px;top:25.2px;width:1px;height:13.45px;background:#c4c8c8"></div>
<div style="left:667.7px;top:25.2px;width:1px;height:13.45px;background:#c4c8c8"></div>
<div style="left:717.0px;top:25.2px;width:1px;height:13.45px;background:#c4c8c8"></div>
<div style="left:766.3px;top:25.2px;width:1px;height:13.45px;background:#c4c8c8"></div>
<div style="left:7px;top:38.6px;width:939px;height:13.45px;background:#fff"></div>
<div style="left:0;top:51.3px;width:946px;height:1px;background:#c8cccc"></div>
<div style="left:0;top:38.6px;width:6.7px;height:12.649999999999999px;background:#f0f0f0"></div>
<div style="left:0;top:51.1px;width:7px;height:1px;background:#484848"></div>
<div style="left:29.3px;top:38.6px;width:1px;height:13.45px;background:#c4c8c8"></div>
<div style="left:78.6px;top:38.6px;width:1px;height:13.45px;background:#c4c8c8"></div>
<div style="left:127.9px;top:38.6px;width:1px;height:13.45px;background:#c4c8c8"></div>
<div style="left:177.2px;top:38.6px;width:1px;height:13.45px;background:#c4c8c8"></div>
<div style="left:226.5px;top:38.6px;width:1px;height:13.45px;background:#c4c8c8"></div>
<div style="left:275.8px;top:38.6px;width:1px;height:13.45px;background:#c4c8c8"></div>
<div style="left:313.7px;top:38.6px;width:1px;height:13.45px;background:#c4c8c8"></div>
<div style="left:343.8px;top:38.6px;width:1px;height:13.45px;background:#c4c8c8"></div>
<div style="left:569.1px;top:38.6px;width:1px;height:13.45px;background:#c4c8c8"></div>
<div style="left:618.4px;top:38.6px;width:1px;height:13.45px;background:#c4c8c8"></div>
<div style="left:667.7px;top:38.6px;width:1px;height:13.45px;background:#c4c8c8"></div>
<div style="left:717.0px;top:38.6px;width:1px;height:13.45px;background:#c4c8c8"></div>
<div style="left:766.3px;top:38.6px;width:1px;height:13.45px;background:#c4c8c8"></div>
<div style="left:7px;top:52.1px;width:939px;height:13.45px;background:#dff5f5"></div>
<div style="left:0;top:64.8px;width:946px;height:1px;background:#c8cccc"></div>
<div style="left:0;top:52.1px;width:6.7px;height:12.649999999999999px;background:#f0f0f0"></div>
<div style="left:0;top:64.6px;width:7px;height:1px;background:#484848"></div>
<div style="left:29.3px;top:52.1px;width:1px;height:13.45px;background:#c4c8c8"></div>
<div style="left:78.6px;top:52.1px;width:1px;height:13.45px;background:#c4c8c8"></div>
<div style="left:127.9px;top:52.1px;width:1px;height:13.45px;background:#c4c8c8"></div>
<div style="left:177.2px;top:52.1px;width:1px;height:13.45px;background:#c4c8c8"></div>
<div style="left:226.5px;top:52.1px;width:1px;height:13.45px;background:#c4c8c8"></div>
<div style="left:275.8px;top:52.1px;width:1px;height:13.45px;background:#c4c8c8"></div>
<div style="left:313.7px;top:52.1px;width:1px;height:13.45px;background:#c4c8c8"></div>
<div style="left:343.8px;top:52.1px;width:1px;height:13.45px;background:#c4c8c8"></div>
<div style="left:569.1px;top:52.1px;width:1px;height:13.45px;background:#c4c8c8"></div>
<div style="left:618.4px;top:52.1px;width:1px;height:13.45px;background:#c4c8c8"></div>
<div style="left:667.7px;top:52.1px;width:1px;height:13.45px;background:#c4c8c8"></div>
<div style="left:717.0px;top:52.1px;width:1px;height:13.45px;background:#c4c8c8"></div>
<div style="left:766.3px;top:52.1px;width:1px;height:13.45px;background:#c4c8c8"></div>
<div style="left:7px;top:65.6px;width:939px;height:13.45px;background:#fff"></div>
<div style="left:0;top:78.2px;width:946px;height:1px;background:#c8cccc"></div>
<div style="left:0;top:65.6px;width:6.7px;height:12.649999999999999px;background:#f0f0f0"></div>
<div style="left:0;top:78.0px;width:7px;height:1px;background:#484848"></div>
<div style="left:29.3px;top:65.6px;width:1px;height:13.45px;background:#c4c8c8"></div>
<div style="left:78.6px;top:65.6px;width:1px;height:13.45px;background:#c4c8c8"></div>
<div style="left:127.9px;top:65.6px;width:1px;height:13.45px;background:#c4c8c8"></div>
<div style="left:177.2px;top:65.6px;width:1px;height:13.45px;background:#c4c8c8"></div>
<div style="left:226.5px;top:65.6px;width:1px;height:13.45px;background:#c4c8c8"></div>
<div style="left:275.8px;top:65.6px;width:1px;height:13.45px;background:#c4c8c8"></div>
<div style="left:313.7px;top:65.6px;width:1px;height:13.45px;background:#c4c8c8"></div>
<div style="left:343.8px;top:65.6px;width:1px;height:13.45px;background:#c4c8c8"></div>
<div style="left:569.1px;top:65.6px;width:1px;height:13.45px;background:#c4c8c8"></div>
<div style="left:618.4px;top:65.6px;width:1px;height:13.45px;background:#c4c8c8"></div>
<div style="left:667.7px;top:65.6px;width:1px;height:13.45px;background:#c4c8c8"></div>
<div style="left:717.0px;top:65.6px;width:1px;height:13.45px;background:#c4c8c8"></div>
<div style="left:766.3px;top:65.6px;width:1px;height:13.45px;background:#c4c8c8"></div>
<div style="left:7px;top:79.0px;width:939px;height:13.45px;background:#dff5f5"></div>
<div style="left:0;top:91.7px;width:946px;height:1px;background:#c8cccc"></div>
<div style="left:0;top:79.0px;width:6.7px;height:12.649999999999999px;background:#f0f0f0"></div>
<div style="left:0;top:91.5px;width:7px;height:1px;background:#484848"></div>
<div style="left:29.3px;top:79.0px;width:1px;height:13.45px;background:#c4c8c8"></div>
<div style="left:78.6px;top:79.0px;width:1px;height:13.45px;background:#c4c8c8"></div>
<div style="left:127.9px;top:79.0px;width:1px;height:13.45px;background:#c4c8c8"></div>
<div style="left:177.2px;top:79.0px;width:1px;height:13.45px;background:#c4c8c8"></div>
<div style="left:226.5px;top:79.0px;width:1px;height:13.45px;background:#c4c8c8"></div>
<div style="left:275.8px;top:79.0px;width:1px;height:13.45px;background:#c4c8c8"></div>
<div style="left:313.7px;top:79.0px;width:1px;height:13.45px;background:#c4c8c8"></div>
<div style="left:343.8px;top:79.0px;width:1px;height:13.45px;background:#c4c8c8"></div>
<div style="left:569.1px;top:79.0px;width:1px;height:13.45px;background:#c4c8c8"></div>
<div style="left:618.4px;top:79.0px;width:1px;height:13.45px;background:#c4c8c8"></div>
<div style="left:667.7px;top:79.0px;width:1px;height:13.45px;background:#c4c8c8"></div>
<div style="left:717.0px;top:79.0px;width:1px;height:13.45px;background:#c4c8c8"></div>
<div style="left:766.3px;top:79.0px;width:1px;height:13.45px;background:#c4c8c8"></div>
</div>
<div style="left:69px;top:352px;width:946px;height:108px;overflow:hidden">
<span class="t " style="left:22.21px;transform-origin:100% 0;top:14px;font-size:9.7px;color:#fff;transform:scaleX(0.8312);">1</span>
<span class="t " style="left:60.72px;transform-origin:100% 0;top:14px;font-size:9.7px;color:#000;transform:scaleX(0.8312);">134</span>
<span class="t " style="left:81.50px;transform-origin:0 0;top:14px;font-size:9.7px;color:#000;transform:scaleX(0.8453);">11223344</span>
<span class="t " style="left:130.80px;transform-origin:0 0;top:14px;font-size:9.7px;color:#000;transform:scaleX(0.8929);">21/07/2019</span>
<span class="t " style="left:180.10px;transform-origin:0 0;top:14px;font-size:9.7px;color:#000;transform:scaleX(0.8929);">21/07/2019</span>
<span class="t " style="left:278.70px;transform-origin:0 0;top:14px;font-size:9.7px;color:#000;transform:scaleX(0.7568);">F</span>
<span class="t " style="left:320.52px;transform-origin:100% 0;top:14px;font-size:9.7px;color:#000;transform:scaleX(0.8312);">6950</span>
<span class="t " style="left:346.70px;transform-origin:0 0;top:14px;font-size:9.7px;color:#000;transform:scaleX(0.8194);">CONTROLLER-PLUS</span>
<span class="t " style="left:587.03px;transform-origin:100% 0;top:14px;font-size:9.7px;color:#000;transform:scaleX(0.8313);">168,49</span>
<span class="t " style="left:647.12px;transform-origin:100% 0;top:14px;font-size:9.7px;color:#000;transform:scaleX(0.8314);">0,00</span>
<span class="t " style="left:696.42px;transform-origin:100% 0;top:14px;font-size:9.7px;color:#000;transform:scaleX(0.8314);">0,00</span>
<span class="t " style="left:734.93px;transform-origin:100% 0;top:14px;font-size:9.7px;color:#000;transform:scaleX(0.8313);">168,49</span>
<span class="t " style="left:769.20px;transform-origin:0 0;top:14px;font-size:9.7px;color:#000;transform:scaleX(0.8312);">12345678901234567890123456787878787878787</span>
<span class="t " style="left:22.21px;transform-origin:100% 0;top:27px;font-size:9.7px;color:#000;transform:scaleX(0.8312);">1</span>
<span class="t " style="left:60.72px;transform-origin:100% 0;top:27px;font-size:9.7px;color:#000;transform:scaleX(0.8312);">134</span>
<span class="t " style="left:81.50px;transform-origin:0 0;top:27px;font-size:9.7px;color:#000;transform:scaleX(0.8312);">96002999</span>
<span class="t " style="left:130.80px;transform-origin:0 0;top:27px;font-size:9.7px;color:#000;transform:scaleX(0.8929);">19/08/2019</span>
<span class="t " style="left:180.10px;transform-origin:0 0;top:27px;font-size:9.7px;color:#000;transform:scaleX(0.8929);">16/09/2019</span>
<span class="t " style="left:278.70px;transform-origin:0 0;top:27px;font-size:9.7px;color:#000;transform:scaleX(0.7568);">F</span>
<span class="t " style="left:320.52px;transform-origin:100% 0;top:27px;font-size:9.7px;color:#000;transform:scaleX(0.8312);">7985</span>
<span class="t " style="left:346.70px;transform-origin:0 0;top:27px;font-size:9.7px;color:#000;transform:scaleX(0.8236);">ODONTOPREV S.A.</span>
<span class="t " style="left:592.43px;transform-origin:100% 0;top:27px;font-size:9.7px;color:#000;transform:scaleX(0.8313);">65,94</span>
<span class="t " style="left:647.12px;transform-origin:100% 0;top:27px;font-size:9.7px;color:#000;transform:scaleX(0.8314);">0,00</span>
<span class="t " style="left:696.42px;transform-origin:100% 0;top:27px;font-size:9.7px;color:#000;transform:scaleX(0.8314);">0,00</span>
<span class="t " style="left:740.33px;transform-origin:100% 0;top:27px;font-size:9.7px;color:#000;transform:scaleX(0.8313);">65,94</span>
<span class="t " style="left:769.20px;transform-origin:0 0;top:27px;font-size:9.7px;color:#000;transform:scaleX(0.8312);">23792372059200601921723007042809880140000</span>
<span class="t " style="left:22.21px;transform-origin:100% 0;top:41px;font-size:9.7px;color:#000;transform:scaleX(0.8312);">1</span>
<span class="t " style="left:60.72px;transform-origin:100% 0;top:41px;font-size:9.7px;color:#000;transform:scaleX(0.8312);">134</span>
<span class="t " style="left:81.50px;transform-origin:0 0;top:41px;font-size:9.7px;color:#000;transform:scaleX(0.8312);">392956</span>
<span class="t " style="left:130.80px;transform-origin:0 0;top:41px;font-size:9.7px;color:#000;transform:scaleX(0.8929);">07/08/2019</span>
<span class="t " style="left:180.10px;transform-origin:0 0;top:41px;font-size:9.7px;color:#000;transform:scaleX(0.8929);">25/08/2019</span>
<span class="t " style="left:278.70px;transform-origin:0 0;top:41px;font-size:9.7px;color:#000;transform:scaleX(0.7568);">F</span>
<span class="t " style="left:320.52px;transform-origin:100% 0;top:41px;font-size:9.7px;color:#000;transform:scaleX(0.8312);">7989</span>
<span class="t " style="left:346.70px;transform-origin:0 0;top:41px;font-size:9.7px;color:#000;transform:scaleX(0.8748);">TIM S/A</span>
<span class="t " style="left:587.03px;transform-origin:100% 0;top:41px;font-size:9.7px;color:#000;transform:scaleX(0.8313);">141,57</span>
<span class="t " style="left:647.12px;transform-origin:100% 0;top:41px;font-size:9.7px;color:#000;transform:scaleX(0.8314);">0,00</span>
<span class="t " style="left:696.42px;transform-origin:100% 0;top:41px;font-size:9.7px;color:#000;transform:scaleX(0.8314);">0,00</span>
<span class="t " style="left:734.93px;transform-origin:100% 0;top:41px;font-size:9.7px;color:#000;transform:scaleX(0.8313);">141,57</span>
<span class="t " style="left:769.20px;transform-origin:0 0;top:41px;font-size:9.7px;color:#000;transform:scaleX(0.8339);">84690000001541570109011000392956710910090</span>
<span class="t " style="left:22.21px;transform-origin:100% 0;top:54px;font-size:9.7px;color:#000;transform:scaleX(0.8312);">1</span>
<span class="t " style="left:60.72px;transform-origin:100% 0;top:54px;font-size:9.7px;color:#000;transform:scaleX(0.8312);">134</span>
<span class="t " style="left:81.50px;transform-origin:0 0;top:54px;font-size:9.7px;color:#000;transform:scaleX(0.8312);">349854</span>
<span class="t " style="left:130.80px;transform-origin:0 0;top:54px;font-size:9.7px;color:#000;transform:scaleX(0.8929);">01/09/2019</span>
<span class="t " style="left:180.10px;transform-origin:0 0;top:54px;font-size:9.7px;color:#000;transform:scaleX(0.8929);">10/09/2019</span>
<span class="t " style="left:278.70px;transform-origin:0 0;top:54px;font-size:9.7px;color:#000;transform:scaleX(0.7568);">F</span>
<span class="t " style="left:320.52px;transform-origin:100% 0;top:54px;font-size:9.7px;color:#000;transform:scaleX(0.8312);">6525</span>
<span class="t " style="left:346.70px;transform-origin:0 0;top:54px;font-size:9.7px;color:#000;transform:scaleX(0.8377);">CLARO S/A</span>
<span class="t " style="left:587.03px;transform-origin:100% 0;top:54px;font-size:9.7px;color:#000;transform:scaleX(0.8313);">218,34</span>
<span class="t " style="left:647.12px;transform-origin:100% 0;top:54px;font-size:9.7px;color:#000;transform:scaleX(0.8314);">0,00</span>
<span class="t " style="left:696.42px;transform-origin:100% 0;top:54px;font-size:9.7px;color:#000;transform:scaleX(0.8314);">0,00</span>
<span class="t " style="left:734.93px;transform-origin:100% 0;top:54px;font-size:9.7px;color:#000;transform:scaleX(0.8313);">218,34</span>
<span class="t " style="left:769.20px;transform-origin:0 0;top:54px;font-size:9.7px;color:#000;transform:scaleX(0.8312);">84690000002318340296201790910003000800360</span>
<span class="t " style="left:22.21px;transform-origin:100% 0;top:67px;font-size:9.7px;color:#000;transform:scaleX(0.8312);">1</span>
<span class="t " style="left:60.72px;transform-origin:100% 0;top:67px;font-size:9.7px;color:#000;transform:scaleX(0.8312);">134</span>
<span class="t " style="left:81.50px;transform-origin:0 0;top:67px;font-size:9.7px;color:#000;transform:scaleX(0.8312);">14493256</span>
<span class="t " style="left:130.80px;transform-origin:0 0;top:67px;font-size:9.7px;color:#000;transform:scaleX(0.8929);">02/08/2019</span>
<span class="t " style="left:180.10px;transform-origin:0 0;top:67px;font-size:9.7px;color:#000;transform:scaleX(0.8929);">19/08/2019</span>
<span class="t " style="left:278.70px;transform-origin:0 0;top:67px;font-size:9.7px;color:#000;transform:scaleX(0.7568);">F</span>
<span class="t " style="left:325.92px;transform-origin:100% 0;top:67px;font-size:9.7px;color:#000;transform:scaleX(0.8312);">307</span>
<span class="t " style="left:346.70px;transform-origin:0 0;top:67px;font-size:9.7px;color:#000;transform:scaleX(0.8556);">LUZ 111639271</span>
<span class="t " style="left:587.03px;transform-origin:100% 0;top:67px;font-size:9.7px;color:#000;transform:scaleX(0.8313);">497,75</span>
<span class="t " style="left:647.12px;transform-origin:100% 0;top:67px;font-size:9.7px;color:#000;transform:scaleX(0.8314);">0,00</span>
<span class="t " style="left:696.42px;transform-origin:100% 0;top:67px;font-size:9.7px;color:#000;transform:scaleX(0.8314);">0,00</span>
<span class="t " style="left:734.93px;transform-origin:100% 0;top:67px;font-size:9.7px;color:#000;transform:scaleX(0.8313);">497,75</span>
<span class="t " style="left:769.20px;transform-origin:0 0;top:67px;font-size:9.7px;color:#000;transform:scaleX(0.8312);">83630000004697750048100632100712521400040</span>
<span class="t " style="left:22.21px;transform-origin:100% 0;top:81px;font-size:9.7px;color:#000;transform:scaleX(0.8312);">1</span>
<span class="t " style="left:60.72px;transform-origin:100% 0;top:81px;font-size:9.7px;color:#000;transform:scaleX(0.8312);">134</span>
<span class="t " style="left:81.50px;transform-origin:0 0;top:81px;font-size:9.7px;color:#000;transform:scaleX(0.8312);">9659081</span>
<span class="t " style="left:130.80px;transform-origin:0 0;top:81px;font-size:9.7px;color:#000;transform:scaleX(0.8929);">20/08/2019</span>
<span class="t " style="left:180.10px;transform-origin:0 0;top:81px;font-size:9.7px;color:#000;transform:scaleX(0.8929);">10/09/2019</span>
<span class="t " style="left:278.70px;transform-origin:0 0;top:81px;font-size:9.7px;color:#000;transform:scaleX(0.7568);">F</span>
<span class="t " style="left:320.52px;transform-origin:100% 0;top:81px;font-size:9.7px;color:#000;transform:scaleX(0.8312);">7987</span>
<span class="t " style="left:346.70px;transform-origin:0 0;top:81px;font-size:9.7px;color:#000;transform:scaleX(0.8296);">BRADESCO ADMINISTRAD</span>
<span class="t " style="left:587.03px;transform-origin:100% 0;top:81px;font-size:9.7px;color:#000;transform:scaleX(0.8313);">483,73</span>
<span class="t " style="left:647.12px;transform-origin:100% 0;top:81px;font-size:9.7px;color:#000;transform:scaleX(0.8314);">0,00</span>
<span class="t " style="left:696.42px;transform-origin:100% 0;top:81px;font-size:9.7px;color:#000;transform:scaleX(0.8314);">0,00</span>
<span class="t " style="left:734.93px;transform-origin:100% 0;top:81px;font-size:9.7px;color:#000;transform:scaleX(0.8313);">483,73</span>
<span class="t " style="left:769.20px;transform-origin:0 0;top:81px;font-size:9.7px;color:#000;transform:scaleX(0.8339);">23790001169830202877843026080309480080000</span>
</div>
<div style="left:75.6px;top:352px;width:1px;height:92.4px;background:#303030;"></div>
<svg style="left:70px;top:366px" width="6" height="9" viewBox="0 0 6 9"><path d="M0.5 0.5 L5 4.5 L0.5 8.5 Z" fill="#000"/></svg>
<div style="left:69px;top:460px;width:946px;height:14px;background:#f8f8f8;"></div>
<div style="left:69px;top:460px;width:14px;height:14px;background:#f0f0f0;border-right:1px solid #707070;border-bottom:1px solid #a0a0a0;box-sizing:border-box"></div>
<svg style="left:73px;top:463.5px" width="5" height="7" viewBox="0 0 5 7"><path d="M4 0.5 L0.8 3.5 L4 6.5 Z" fill="#000"/></svg>
<div style="left:83px;top:460px;width:304.5px;height:14px;background:#f0f0f0;border-right:1px solid #707070;border-bottom:1px solid #a0a0a0;box-sizing:border-box"></div>
<div style="left:1001px;top:460px;width:14px;height:14px;background:#f0f0f0;border-left:1px solid #e0e0e0;border-right:1px solid #707070;border-bottom:1px solid #a0a0a0;box-sizing:border-box"></div>
<svg style="left:1006px;top:463.5px" width="5" height="7" viewBox="0 0 5 7"><path d="M1 0.5 L4.2 3.5 L1 6.5 Z" fill="#000"/></svg>
<div style="left:20px;top:165px;width:970px;height:79px;border:1px solid #e8474f;box-sizing:border-box"></div>
<div style="left:14px;top:330px;width:961px;height:123px;border:1px solid #e8474f;box-sizing:border-box"></div>
<div style="left:1018px;top:98px;width:1px;height:378px;background:#dedede;"></div>
<div style="left:18px;top:476px;width:1001px;height:1px;background:#e6e6e6;"></div>
<div style="left:18px;top:481px;width:1003px;height:1px;background:#e0e0e0;"></div>
<div style="left:18px;top:482px;width:1003px;height:12px;background:#ececec;border-top:1px solid #c8c8c8;border-left:1px solid #c8c8c8;box-sizing:border-box"></div>
<span class="t " style="left:420.60px;transform-origin:0 0;top:482px;font-size:8.6px;color:#000;font-weight:bold;transform:scaleX(1.0661);">6 títulos listados no valor total de R$ 1.575,82</span>
<svg style="left:1008px;top:482px" width="12" height="11" viewBox="0 0 12 11"><path d="M11 1 L1 11 M11 4.5 L4.5 11 M11 8 L8 11" stroke="#b0b0b0" stroke-width="1"/></svg>
<div style="left:0px;top:494px;width:1021px;height:20px;background:#fff;"></div>
<div style="left:0px;top:496.5px;width:129px;height:1.2px;background:#707070;"></div>
<div style="left:133px;top:497px;width:1px;height:14px;background:#a0a0a0;"></div>
<div style="left:3px;top:500px;width:12px;height:10px;border:1px solid #5a8ad0;border-radius:1.5px;box-sizing:border-box;background:#dce8f8"></div>
<svg style="left:5px;top:501.5px" width="8" height="8" viewBox="0 0 8 8"><path d="M1.5 5 L4.5 0.8 L4.2 3.2 L7 2.8 L3.5 7.2 L3.8 4.6 Z" fill="#f0a820"/></svg>
<span class="t " style="left:19.50px;transform-origin:0 0;top:500px;font-size:9.4px;color:#202020;transform:scaleX(0.8382);">Consulta de Lote de Remessa</span>
<div style="left:0px;top:513px;width:1021px;height:1px;background:#f0f0f0;"></div>
</div></body></html>
